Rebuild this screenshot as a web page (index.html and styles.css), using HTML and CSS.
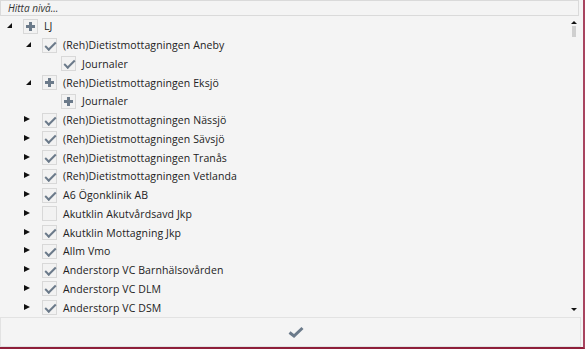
FILE: index.html
```html
<!DOCTYPE html>
<html lang="sv">
<head>
  <meta charset="UTF-8">
  <title>Hitta nivå</title>
  <link rel="stylesheet" href="styles.css">
</head>
<body>
  <div class="panel">
    <div class="search">Hitta nivå...</div>

    <div class="tree">
      <div class="row lvl0"><span class="arrow open"></span><span class="box plus"></span><span class="label">LJ</span></div>
      <div class="row lvl1"><span class="arrow open"></span><span class="box check"></span><span class="label">(Reh)Dietistmottagningen Aneby</span></div>
      <div class="row lvl2"><span class="arrow"></span><span class="box check"></span><span class="label">Journaler</span></div>
      <div class="row lvl1"><span class="arrow open"></span><span class="box plus"></span><span class="label">(Reh)Dietistmottagningen Eksjö</span></div>
      <div class="row lvl2"><span class="arrow"></span><span class="box plus"></span><span class="label">Journaler</span></div>
      <div class="row lvl1"><span class="arrow closed"></span><span class="box check"></span><span class="label">(Reh)Dietistmottagningen Nässjö</span></div>
      <div class="row lvl1"><span class="arrow closed"></span><span class="box check"></span><span class="label">(Reh)Dietistmottagningen Sävsjö</span></div>
      <div class="row lvl1"><span class="arrow closed"></span><span class="box check"></span><span class="label">(Reh)Dietistmottagningen Tranås</span></div>
      <div class="row lvl1"><span class="arrow closed"></span><span class="box check"></span><span class="label">(Reh)Dietistmottagningen Vetlanda</span></div>
      <div class="row lvl1"><span class="arrow closed"></span><span class="box check"></span><span class="label">A6 Ögonklinik AB</span></div>
      <div class="row lvl1"><span class="arrow closed"></span><span class="box"></span><span class="label">Akutklin Akutvårdsavd Jkp</span></div>
      <div class="row lvl1"><span class="arrow closed"></span><span class="box check"></span><span class="label">Akutklin Mottagning Jkp</span></div>
      <div class="row lvl1"><span class="arrow closed"></span><span class="box check"></span><span class="label">Allm Vmo</span></div>
      <div class="row lvl1"><span class="arrow closed"></span><span class="box check"></span><span class="label">Anderstorp VC Barnhälsovården</span></div>
      <div class="row lvl1"><span class="arrow closed"></span><span class="box check"></span><span class="label">Anderstorp VC DLM</span></div>
      <div class="row lvl1"><span class="arrow closed"></span><span class="box check"></span><span class="label">Anderstorp VC DSM</span></div>

      <div class="scrollbar">
        <span class="sb-up"></span>
        <span class="sb-thumb"></span>
        <span class="sb-down"></span>
      </div>
    </div>

    <div class="footer">
      <svg width="16" height="12" viewBox="0 0 16 12">
        <path d="M1.5 6.5 L6 10 L14.5 2" fill="none" stroke="#6b7a8a" stroke-width="3"/>
      </svg>
    </div>
  </div>
</body>
</html>
```

FILE: styles.css
```css
body {
  margin: 0;
  background-color: #f4f4f4;
  font-family: 'Open Sans', 'Noto Sans', sans-serif;
  font-size: 10.5px;
  color: #222;
}

.panel {
  width: 583px;
  height: 347px;
  border-right: 2px solid #a8445f;
  border-bottom: 2px solid #8e1f3a;
  display: flex;
  flex-direction: column;
  background: #f4f4f4;
}

.search {
  height: 14px;
  margin-right: 4px;
  border: 1px solid #dadada;
  padding-left: 7px;
  font-style: italic;
  font-size: 10px;
  line-height: 14px;
  color: #333;
}

.tree {
  position: relative;
  height: 300px;
  padding-top: 1px;
  overflow: hidden;
}

.row {
  height: 18.75px;
  display: flex;
  align-items: center;
  white-space: nowrap;
}

.lvl0 { padding-left: 5px; }
.lvl1 { padding-left: 24px; }
.lvl2 { padding-left: 43px; }

.arrow {
  width: 18px;
  height: 18px;
  position: relative;
  flex-shrink: 0;
}

.arrow.open::before {
  content: "";
  position: absolute;
  left: 2px;
  top: 6px;
  border-left: 5px solid transparent;
  border-bottom: 5px solid #111;
}

.arrow.closed::before {
  content: "";
  position: absolute;
  left: 0;
  top: 5px;
  border-top: 3.5px solid transparent;
  border-bottom: 3.5px solid transparent;
  border-left: 6px solid #111;
}

.box {
  width: 13px;
  height: 13px;
  border: 1px solid #d8d8d8;
  background: #f2f2f2;
  margin-right: 6px;
  position: relative;
  flex-shrink: 0;
}

.box.check::before {
  content: "";
  position: absolute;
  left: 2px;
  top: 1px;
  width: 9px;
  height: 4px;
  border-left: 2.5px solid #6b7a8a;
  border-bottom: 2.5px solid #6b7a8a;
  transform: translate(0, 2px) rotate(-45deg);
}

.box.plus::before,
.box.plus::after {
  content: "";
  position: absolute;
  background: #6b7a8a;
}

.box.plus::before {
  left: 2px;
  top: 5px;
  width: 9px;
  height: 3px;
}

.box.plus::after {
  left: 5px;
  top: 2px;
  width: 3px;
  height: 9px;
}

.label {
  color: #222;
  letter-spacing: 0.1px;
}

.scrollbar {
  position: absolute;
  right: 6px;
  top: 2px;
  bottom: 0;
  width: 6px;
}

.sb-up {
  position: absolute;
  top: 3px;
  left: 0;
  border-left: 3px solid transparent;
  border-right: 3px solid transparent;
  border-bottom: 3px solid #111;
}

.sb-thumb {
  position: absolute;
  top: 8px;
  left: 1px;
  width: 4px;
  height: 11px;
  background: #cfcfcf;
}

.sb-down {
  position: absolute;
  bottom: 6px;
  left: 0;
  border-left: 3px solid transparent;
  border-right: 3px solid transparent;
  border-top: 3px solid #111;
}

.footer {
  flex: 1;
  margin-right: 2px;
  border: 1px solid #e2e2e2;
  display: flex;
  align-items: center;
  justify-content: center;
}

.footer svg {
  margin-left: 10px;
}
```
